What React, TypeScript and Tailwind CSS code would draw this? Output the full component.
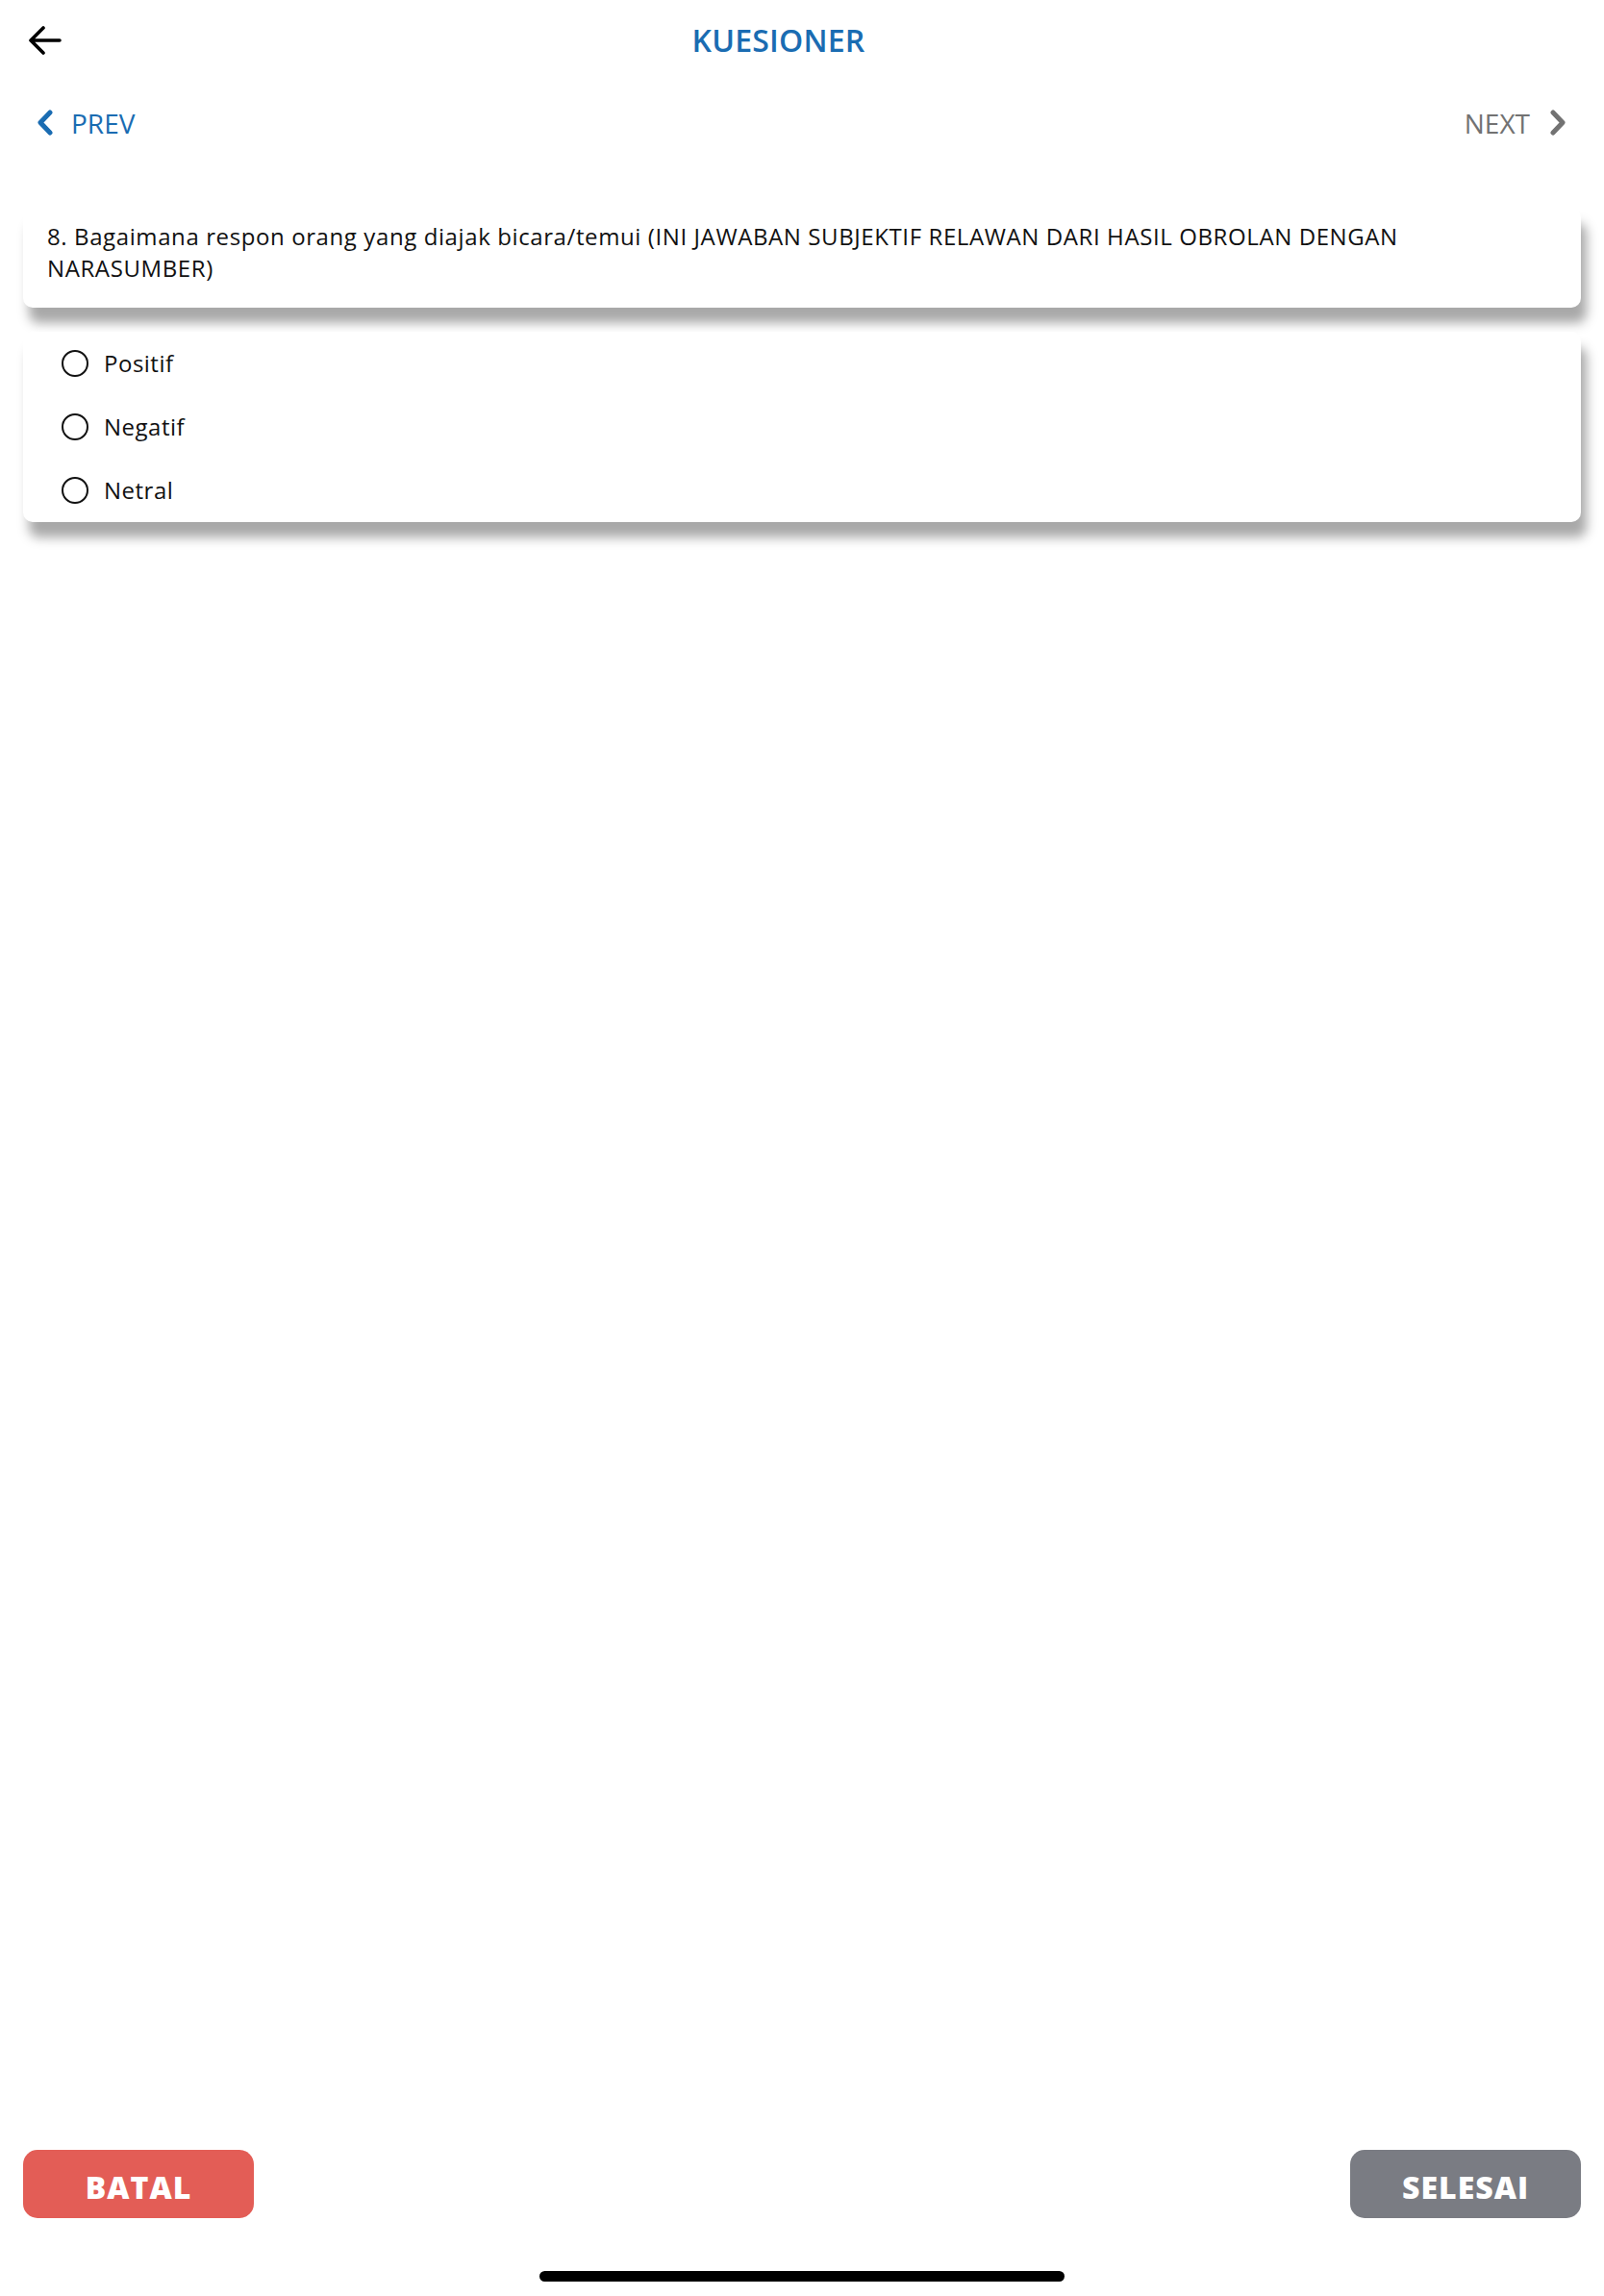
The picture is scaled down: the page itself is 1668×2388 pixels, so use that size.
import React from "react";

const options = ["Positif", "Negatif", "Netral"];

const BackArrow = () => (
  <svg width="34" height="30" viewBox="0 0 34 30" fill="none">
    <path
      d="M2 15 H32 M15 2 L2 15 L15 28"
      stroke="#000"
      strokeWidth="3.6"
      strokeLinecap="round"
      strokeLinejoin="round"
    />
  </svg>
);

const Chevron = ({ dir, color }: { dir: "left" | "right"; color: string }) => (
  <svg width="18" height="27" viewBox="0 0 18 27" fill="none">
    <path
      d={dir === "left" ? "M14 3 L4 13.5 L14 24" : "M4 3 L14 13.5 L4 24"}
      stroke={color}
      strokeWidth="5"
      strokeLinecap="round"
      strokeLinejoin="round"
    />
  </svg>
);

export default function App() {
  return (
    <div
      className="flex min-h-screen w-full flex-col bg-white text-black"
      style={{ fontFamily: "'Open Sans', 'Noto Sans', sans-serif" }}
    >
      {/* Header */}
      <header className="flex h-[84px] items-center pl-[30px]">
        <div className="flex w-[34px] items-center">
          <BackArrow />
        </div>
        <h1 className="flex-1 pr-[113px] text-center text-[32px] font-semibold tracking-[0.2px] text-[#1a6cb2]">
          KUESIONER
        </h1>
      </header>

      {/* Prev / Next */}
      <nav className="flex h-[86px] items-center justify-between pl-[38px] pr-[39px]">
        <div className="flex items-center gap-[18px]">
          <Chevron dir="left" color="#1a6cb2" />
          <span className="pt-[1px] text-[28px] font-medium text-[#1a6cb2]">PREV</span>
        </div>
        <div className="flex items-center gap-[20px]">
          <span className="pt-[1px] text-[28px] font-medium text-[#727272]">NEXT</span>
          <Chevron dir="right" color="#727272" />
        </div>
      </nav>

      {/* Question */}
      <section className="mx-[24px] mt-[46px] rounded-[10px] bg-white px-[25px] pb-[25px] pt-[13px] shadow-[6px_16px_12px_rgba(0,0,0,0.34)]">
        <p className="text-[24px] leading-[33px] tracking-[0.6px] text-[#111]">
          8. Bagaimana respon orang yang diajak bicara/temui (INI JAWABAN SUBJEKTIF RELAWAN DARI HASIL OBROLAN DENGAN
          <br />
          NARASUMBER)
        </p>
      </section>

      {/* Options */}
      <section className="mx-[24px] mt-[25px] flex flex-col rounded-[10px] bg-white px-[40px] shadow-[6px_16px_12px_rgba(0,0,0,0.34)]">
        {options.map((opt) => (
          <label key={opt} className="flex h-[66px] items-center gap-[16px]">
            <span className="h-[28px] w-[28px] rounded-full border-[2.5px] border-[#111]" />
            <span className="text-[24px] tracking-[0.5px] text-[#111]">{opt}</span>
          </label>
        ))}
      </section>

      <div className="flex-1" />

      {/* Footer buttons */}
      <footer className="flex items-center justify-between px-[24px]">
        <button className="flex h-[71px] w-[240px] items-center justify-center rounded-[15px] bg-[#e35d56] pt-[6px] text-[32px] font-extrabold tracking-[1px] text-white">
          BATAL
        </button>
        <button className="flex h-[71px] w-[240px] items-center justify-center rounded-[15px] bg-[#7a7c83] pt-[6px] text-[32px] font-extrabold tracking-[1px] text-white">
          SELESAI
        </button>
      </footer>

      <div className="flex justify-center pb-[15px] pt-[55px]">
        <div className="h-[11px] w-[546px] rounded-full bg-black" />
      </div>
    </div>
  );
}
